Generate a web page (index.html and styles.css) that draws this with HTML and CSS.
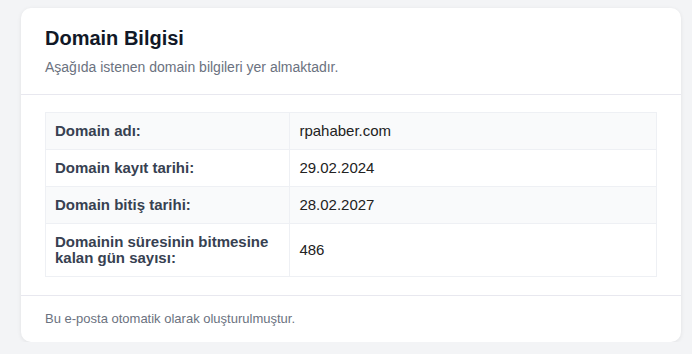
FILE: index.html
```html
<!DOCTYPE html>
<html lang="tr">
<head>
  <meta charset="UTF-8" />
  <meta name="viewport" content="width=device-width, initial-scale=1.0"/>
  <title>Domain Bilgisi</title>
  <link rel="stylesheet" href="styles.css">
</head>
<body>
  <div class="card">
    <div class="card-header">
      <h1>Domain Bilgisi</h1>
      <p>Aşağıda istenen domain bilgileri yer almaktadır.</p>
    </div>

    <div class="card-body">
      <table class="info-table">
        <tr>
          <th>Domain adı:</th>
          <td>rpahaber.com</td>
        </tr>
        <tr>
          <th>Domain kayıt tarihi:</th>
          <td>29.02.2024</td>
        </tr>
        <tr>
          <th>Domain bitiş tarihi:</th>
          <td>28.02.2027</td>
        </tr>
        <tr>
          <th>Domainin süresinin bitmesine kalan gün sayısı:</th>
          <td>486</td>
        </tr>
      </table>
    </div>

    <div class="card-footer">
      Bu e-posta otomatik olarak oluşturulmuştur.
    </div>
  </div>
</body>
</html>
```

FILE: styles.css
```css
* {
  margin: 0;
  padding: 0;
  box-sizing: border-box;
}
body {
  font-family: "Liberation Sans", Arial, sans-serif;
  background-color: #f3f4f6;
  color: #1f2937;
}
.card {
  width: 660px;
  margin: 8px 0 0 21px;
  background: #fff;
  border-radius: 10px;
  box-shadow: 0 1px 4px rgba(0, 0, 0, 0.08);
}
.card-header {
  padding: 18px 24px 18px;
  border-bottom: 1px solid #e8e8ef;
}
.card-header h1 {
  font-size: 20px;
  line-height: 24px;
  color: #111827;
  margin-bottom: 8px;
}
.card-header p {
  font-size: 14px;
  line-height: 18px;
  color: #6b7280;
}
.card-body {
  padding: 17px 24px 18px;
}
.info-table {
  width: 100%;
  border-collapse: collapse;
  border: 1px solid #eef0f4;
  font-size: 15px;
  line-height: 16px;
}
.info-table th,
.info-table td {
  padding: 10px 9px;
  text-align: left;
  vertical-align: middle;
  border: 1px solid #eef0f4;
}
.info-table th {
  width: 40%;
  font-weight: bold;
  color: #374151;
}
.info-table td {
  color: #222;
}
.info-table tr:nth-child(odd) {
  background-color: #f9fafb;
}
.card-footer {
  padding: 15px 24px 15px;
  border-top: 1px solid #e8e8ef;
  font-size: 13px;
  line-height: 16px;
  color: #6b7280;
}
```
